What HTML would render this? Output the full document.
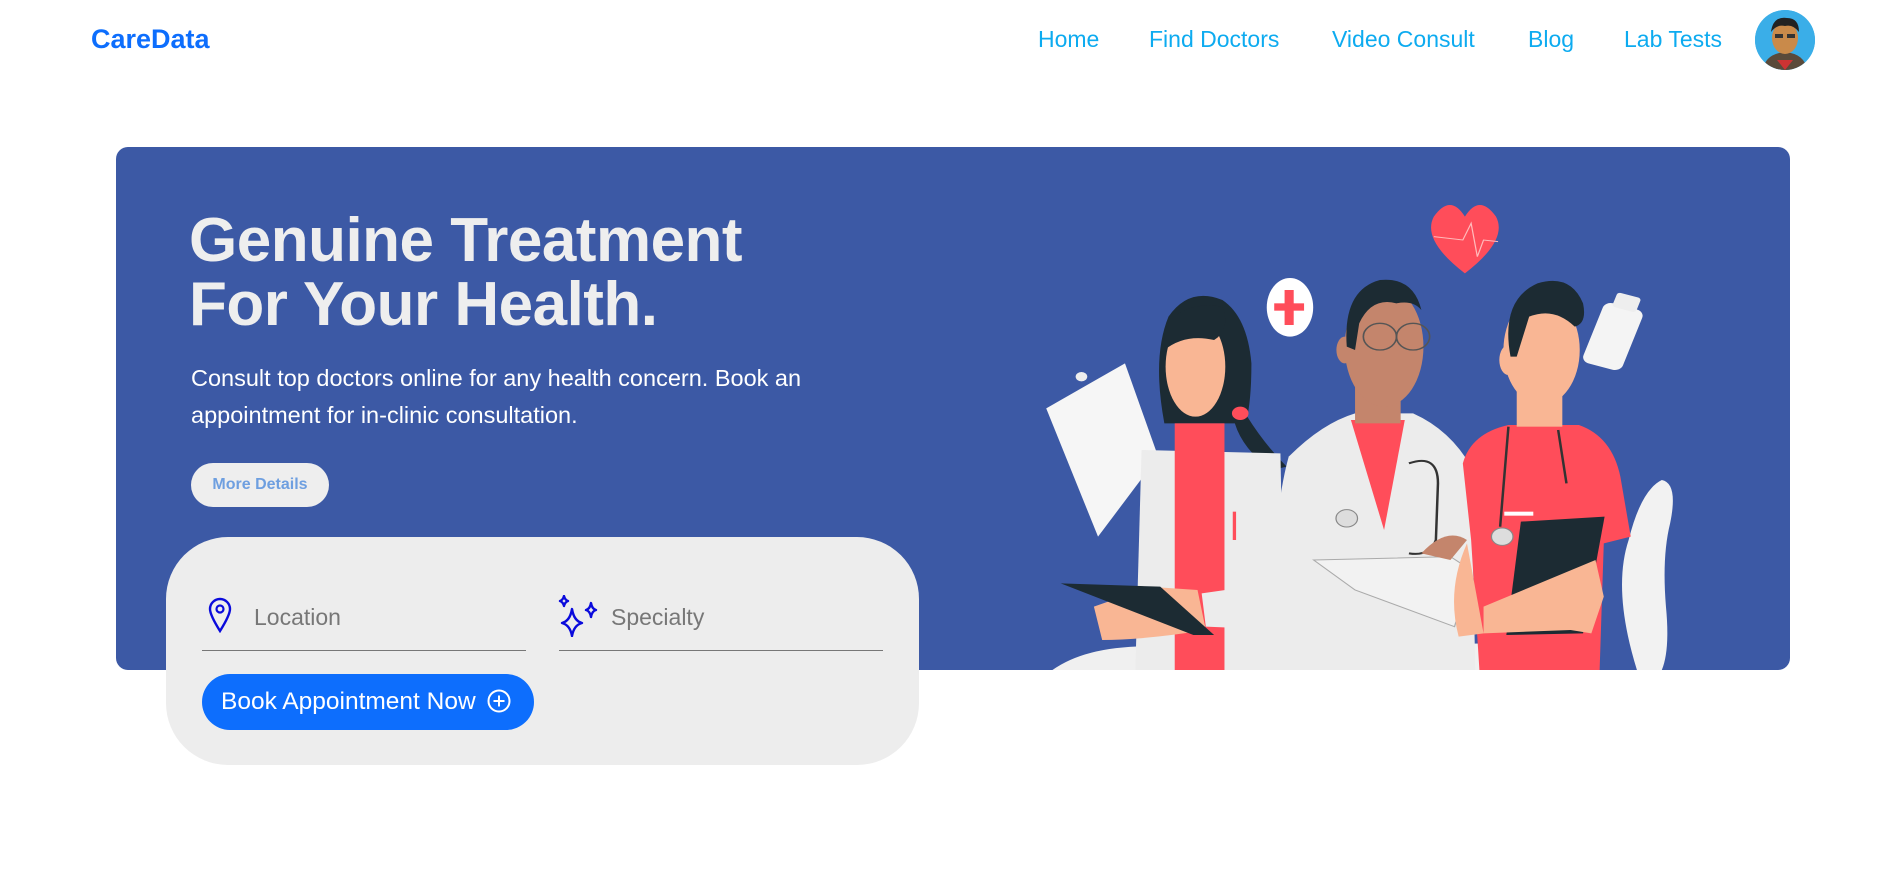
<!DOCTYPE html>
<html><head><meta charset="utf-8"><style>
*{margin:0;padding:0;box-sizing:border-box}
body{width:1899px;height:882px;background:#fff;font-family:"Liberation Sans",sans-serif;position:relative;overflow:hidden}
.logo{position:absolute;left:91px;top:24px;font-size:27px;font-weight:bold;color:#0d6efd}
.nav a{position:absolute;top:26px;font-size:23px;color:#0dabf0;text-decoration:none;white-space:nowrap}
.avatar{position:absolute;left:1755px;top:10px;width:60px;height:60px;border-radius:50%;background:#3aaee8;overflow:hidden}
.banner{position:absolute;left:116px;top:147px;width:1674px;height:523px;background:#3c59a5;border-radius:12px;overflow:hidden}
h1{position:absolute;left:189px;top:209px;font-size:62px;line-height:64px;color:#eeeeee;font-weight:900;letter-spacing:-0.5px;white-space:nowrap}
.p{position:absolute;left:191px;top:360px;font-size:23.5px;line-height:37px;color:#fff;width:720px}
.more{position:absolute;left:191px;top:463px;width:138px;height:44px;border-radius:22px;background:#eee;color:#6e9fe0;font-weight:bold;font-size:16px;text-align:center;line-height:44px}
.card{position:absolute;left:166px;top:537px;width:753px;height:228px;background:#ededed;border-radius:62px}
.field{position:absolute;top:113px;height:1px;background:#777}
.lbl{position:absolute;top:67px;font-size:23px;color:#777}
.btn{position:absolute;left:36px;top:137px;width:332px;height:56px;border-radius:28px;background:#0d6efd;color:#fff;font-size:24.5px;line-height:56px;padding-left:19px;white-space:nowrap}
</style></head><body>
<div class="logo">CareData</div>
<div class="nav">
<a style="left:1038px">Home</a>
<a style="left:1149px">Find Doctors</a>
<a style="left:1332px">Video Consult</a>
<a style="left:1528px">Blog</a>
<a style="left:1624px">Lab Tests</a>
</div>
<div class="avatar"><svg width="60" height="60" viewBox="0 0 60 60"><rect width="60" height="60" fill="#3aaee8"/><path d="M8 60 Q10 44 30 42 Q50 44 52 60Z" fill="#5a4a3a"/><path d="M22 50 L30 60 L38 50Z" fill="#c33"/><ellipse cx="30" cy="28" rx="13" ry="16" fill="#c98a4a"/><path d="M16 22 Q18 6 32 8 Q44 8 44 22 Q38 14 30 16 Q22 14 16 22Z" fill="#222"/><rect x="20" y="24" width="8" height="4" fill="#333"/><rect x="32" y="24" width="8" height="4" fill="#333"/></svg></div>

<div class="banner"></div>
<svg style="position:absolute;left:1040px;top:190px" width="650" height="480" viewBox="0 0 1568 1440" preserveAspectRatio="none">
<path d="M30 1440 Q120 1360 300 1370 L1100 1360 L1100 1440Z" fill="#f0f0f0"/>
<path d="M1440 1440 Q1380 1200 1420 1050 Q1450 900 1500 870 Q1540 880 1520 1000 Q1500 1100 1510 1250 Q1520 1380 1500 1440Z" fill="#f2f2f2"/>
<polygon points="15,655 205,520 285,800 140,1040" fill="#f6f6f6"/>
<circle cx="100" cy="560" r="14" fill="#eee"/>
<path d="M300 700 Q270 500 310 380 Q360 290 440 330 Q500 380 510 520 Q510 620 500 680 Q540 760 595 830 L560 840 Q490 780 470 700Z" fill="#1c2b33"/>
<ellipse cx="375" cy="530" rx="72" ry="150" fill="#f9b694"/>
<path d="M300 420 Q340 330 440 350 Q460 420 420 450 Q350 430 300 480Z" fill="#1c2b33"/>
<circle cx="483" cy="670" r="20" fill="#ff4d5a"/>
<polygon points="245,780 580,790 590,1440 230,1440" fill="#ececec"/>
<rect x="325" y="700" width="120" height="740" fill="#ff4d5a"/>
<rect x="465" y="965" width="8" height="85" fill="#ff4d5a"/>
<path d="M130 1250 Q200 1220 260 1190 L380 1200 L400 1320 Q250 1350 150 1350Z" fill="#f9b694"/>
<polygon points="50,1180 290,1190 420,1335 370,1335" fill="#1c2b33"/>
<path d="M390 1210 L560 1180 L590 1320 L400 1310Z" fill="#ececec"/>
<path d="M600 800 Q680 700 760 670 L900 670 Q990 720 1040 830 L1050 1440 L560 1440 Q555 1000 600 800Z" fill="#ececec"/>
<polygon points="750,690 880,690 830,1020" fill="#ff4d5a"/>
<rect x="760" y="590" width="110" height="110" fill="#c4856c"/>
<ellipse cx="830" cy="470" rx="95" ry="180" fill="#c4856c"/>
<ellipse cx="735" cy="480" rx="20" ry="40" fill="#c4856c"/>
<path d="M740 470 Q730 300 820 270 Q900 260 920 360 Q900 330 860 340 Q800 320 770 400 L760 480Z" fill="#1c2b33"/>
<circle cx="820" cy="440" r="40" fill="none" stroke="#555" stroke-width="4"/><circle cx="900" cy="440" r="40" fill="none" stroke="#555" stroke-width="4"/>
<path d="M890 820 Q960 790 960 880 L955 1050 Q940 1100 890 1090" fill="none" stroke="#333" stroke-width="6"/>
<circle cx="740" cy="985" r="26" fill="#ddd" stroke="#888" stroke-width="3"/>
<path d="M660 1110 L990 1100 L1040 1140 L1000 1310 L760 1200Z" fill="#f2f2f2" stroke="#aaa" stroke-width="3"/>
<path d="M920 1090 Q980 1010 1030 1050 L990 1110Z" fill="#c4856c"/>
<path d="M1020 820 Q1040 730 1130 705 L1300 705 Q1380 740 1400 860 L1425 1040 L1360 1060 L1350 1440 L1060 1440 L1040 1050Z" fill="#ff4d5a"/>
<rect x="1150" y="570" width="110" height="140" fill="#f9b694"/>
<ellipse cx="1210" cy="480" rx="92" ry="165" fill="#f9b694"/>
<ellipse cx="1130" cy="510" rx="22" ry="45" fill="#f9b694"/>
<path d="M1135 500 Q1110 330 1200 280 Q1280 250 1310 340 Q1320 400 1290 410 Q1240 350 1180 380 L1150 500Z" fill="#1c2b33"/>
<path d="M1130 710 L1110 1010 M1250 720 L1270 880" stroke="#333" stroke-width="6" fill="none"/>
<circle cx="1115" cy="1040" r="26" fill="#ddd" stroke="#888" stroke-width="3"/>
<rect x="1120" y="965" width="70" height="12" fill="#fff"/>
<path d="M1030 1060 L1070 1330 L1010 1340 Q980 1200 1030 1060Z" fill="#f9b694"/>
<polygon points="1160,995 1362,980 1310,1330 1125,1335" fill="#1c2b33"/>
<path d="M1070 1250 L1340 1110 L1360 1220 L1330 1330 L1280 1320 L1070 1330Z" fill="#f9b694"/>
<path d="M1025 250 Q920 150 950 80 Q990 10 1025 80 Q1060 10 1100 80 Q1130 150 1025 250Z" fill="#ff4d5a"/>
<path d="M950 140 L1020 150 L1040 100 L1055 200 L1070 150 L1105 155" stroke="#fbb" stroke-width="3" fill="none"/>
<ellipse cx="603" cy="352" rx="56" ry="88" fill="#fff"/>
<rect x="590" y="300" width="22" height="105" fill="#ff4d5a"/><rect x="565" y="340" width="72" height="22" fill="#ff4d5a"/>
<g transform="rotate(18 1385 430)"><rect x="1335" y="345" width="100" height="190" rx="20" fill="#f4f4f4"/><rect x="1355" y="310" width="60" height="45" rx="8" fill="#eee"/></g>
</svg>

<h1>Genuine Treatment<br>For Your Health.</h1>
<div class="p">Consult top doctors online for any health concern. Book an appointment for in-clinic consultation.</div>
<div class="more">More Details</div>

<div class="card">
<svg style="position:absolute;left:42px;top:60px" width="24" height="36" viewBox="0 0 24 36"><path d="M12 34 Q2 18 2 12 A10 10 0 0 1 22 12 Q22 18 12 34Z" fill="none" stroke="#0a0adc" stroke-width="2.4"/><circle cx="12" cy="12" r="3.5" fill="none" stroke="#0a0adc" stroke-width="2.2"/></svg>
<div class="lbl" style="left:88px">Location</div>
<div class="field" style="left:36px;width:324px"></div>
<svg style="position:absolute;left:392px;top:58px" width="40" height="42" viewBox="0 0 40 42"><g fill="none" stroke="#0a0adc" stroke-width="2.4" stroke-linejoin="round"><path d="M14 14 Q16 26 24 28 Q16 30 14 41 Q12 30 4 28 Q12 26 14 14Z"/><path d="M33 8 Q34 14 38 15 Q34 16 33 22 Q32 16 28 15 Q32 14 33 8Z"/><path d="M6 1 Q7 5 10 6 Q7 7 6 11 Q5 7 2 6 Q5 5 6 1Z"/></g></svg>
<div class="lbl" style="left:445px">Specialty</div>
<div class="field" style="left:393px;width:324px"></div>
<div class="btn">Book Appointment Now <svg style="vertical-align:-4px;margin-left:4px" width="24" height="24" viewBox="0 0 24 24"><circle cx="12" cy="12" r="10.5" fill="none" stroke="#fff" stroke-width="2"/><path d="M12 6.5V17.5M6.5 12H17.5" stroke="#fff" stroke-width="2"/></svg></div>
</div>
</body></html>
